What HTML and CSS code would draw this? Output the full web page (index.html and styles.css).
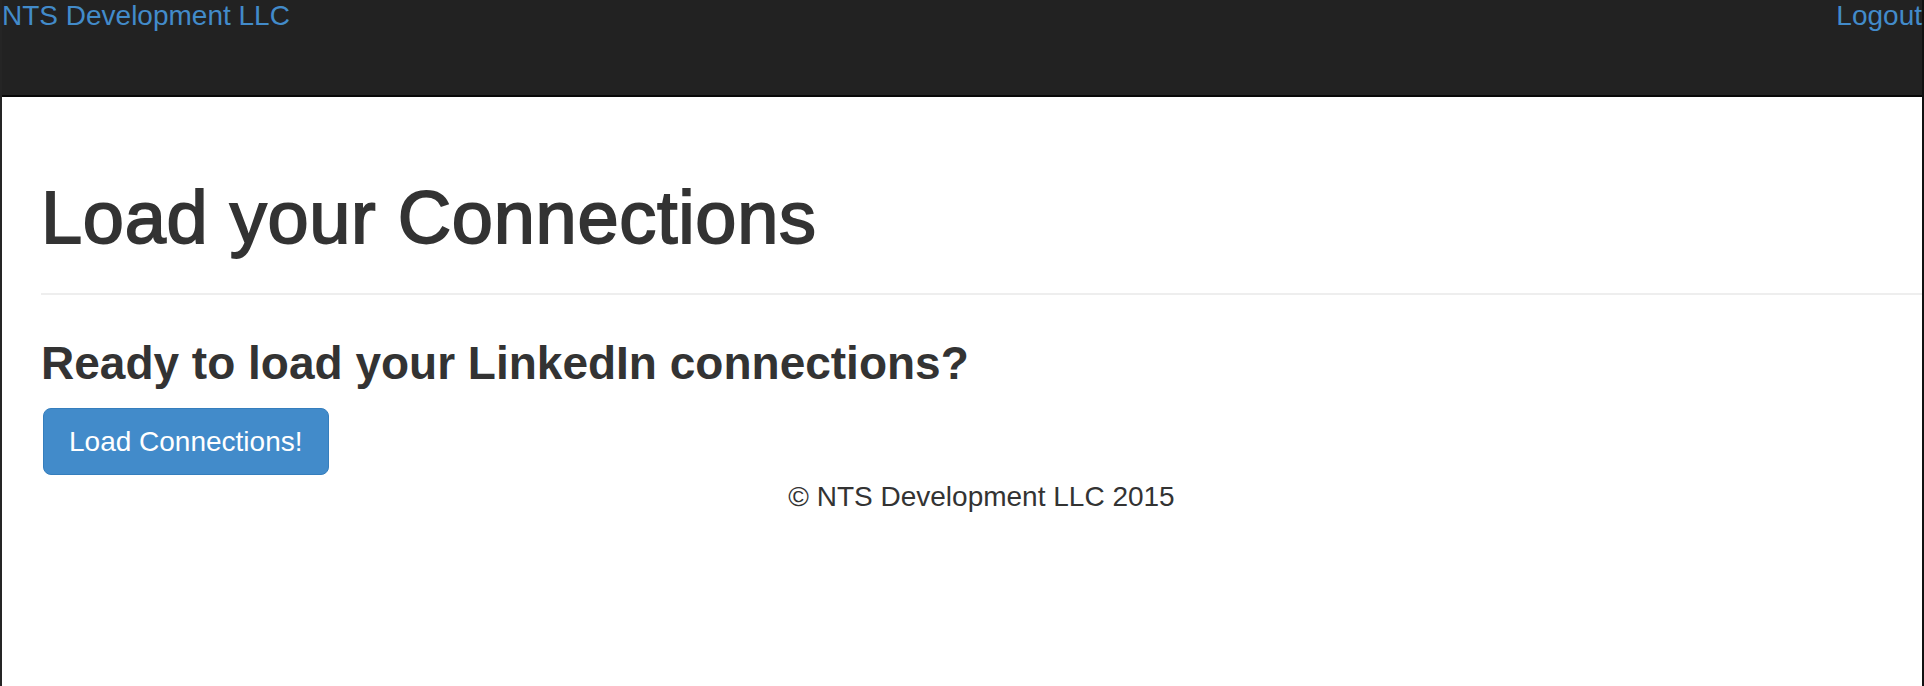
FILE: index.html
```html
<!DOCTYPE html>
<html lang="en">
<head>
<meta charset="utf-8">
<title>Load your Connections</title>
<link rel="stylesheet" href="styles.css">
</head>
<body>
<div class="frame">
  <nav class="navbar">
    <a class="brand" href="#">NTS Development LLC</a>
    <a class="nav-link" href="#">Logout</a>
  </nav>
  <main class="container">
    <div class="page-header">
      <h1>Load your Connections</h1>
    </div>
    <h3 class="lead-q">Ready to load your LinkedIn connections?</h3>
    <button class="btn-primary" type="button">Load Connections!</button>
    <footer class="footer">
      <p>&copy; NTS Development LLC 2015</p>
    </footer>
  </main>
</div>
</body>
</html>
```

FILE: styles.css
```css
html, body {
  margin: 0;
  padding: 0;
  background: #ffffff;
}

body {
  font-family: "Liberation Sans", Arial, Helvetica, sans-serif;
  color: #333333;
}

.frame {
  min-height: 686px;
  box-sizing: border-box;
  border-left: 2px solid #252525;
  border-right: 2px solid #111111;
  display: flex;
  flex-direction: column;
}

.navbar {
  height: 95px;
  background: #222222;
  border-bottom: 2px solid #080808;
  display: flex;
  justify-content: space-between;
  align-items: flex-start;
}

.brand,
.nav-link {
  color: #428bca;
  text-decoration: none;
  font-size: 28px;
  line-height: 32px;
}

.container {
  padding-left: 39px;
}

.page-header {
  margin-top: 80px;
  padding-bottom: 35px;
  border-bottom: 2px solid #eeeeee;
}

.page-header h1 {
  margin: 0;
  font-size: 74px;
  font-weight: 400;
  line-height: 1.1;
  letter-spacing: 0.7px;
  -webkit-text-stroke: 1.8px #333333;
  color: #333333;
}

.lead-q {
  margin: 43px 0 19px;
  font-size: 46px;
  font-weight: 700;
  line-height: 1.1;
  color: #333333;
}

.btn-primary {
  display: block;
  margin-left: 2px;
  font-family: inherit;
  font-size: 28px;
  line-height: 41px;
  padding: 12px 25px;
  color: #ffffff;
  background: #428bca;
  border: 1px solid #357ebd;
  border-radius: 8px;
  cursor: pointer;
}

.footer {
  margin-top: 2px;
  text-align: center;
}

.footer p {
  margin: 0;
  font-size: 28px;
  line-height: 40px;
  color: #333333;
}
```
